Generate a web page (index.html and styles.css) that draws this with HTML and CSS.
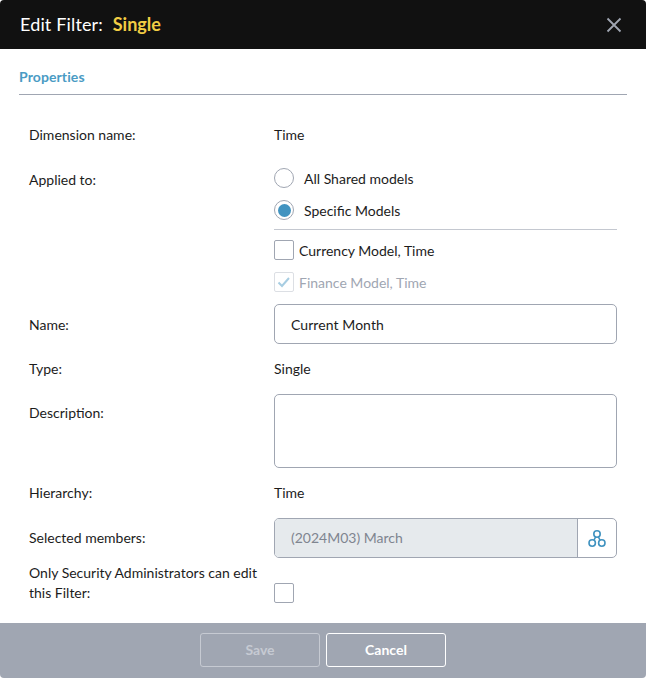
FILE: index.html
```html
<!DOCTYPE html>
<html lang="en">
<head>
<meta charset="utf-8">
<title>Edit Filter</title>
<link rel="stylesheet" href="styles.css">
</head>
<body>
<div class="dialog">
  <header class="head">
    <h1 class="title">Edit Filter: <span class="title-name">Single</span></h1>
    <svg class="close" width="16" height="16" viewBox="0 0 16 16"><path d="M1.5 1.5l13 13M14.5 1.5l-13 13"/></svg>
  </header>
  <main class="body">
    <div class="tab">Properties</div>
    <div class="form">
      <div class="row row-dim"><div class="label">Dimension name:</div><div class="value">Time</div></div>
      <div class="row row-applied">
        <div class="label">Applied to:</div>
        <div class="options">
          <div class="radio-line"><span class="radio"></span>All Shared models</div>
          <div class="radio-line"><span class="radio on"></span>Specific Models</div>
          <div class="divider"></div>
          <div class="check-line"><span class="check"></span>Currency Model, Time</div>
          <div class="check-line disabled"><span class="check">
            <svg width="14" height="14" viewBox="0 0 14 14"><path d="M1.5 7.5l3.5 3.5 7-8"/></svg>
          </span>Finance Model, Time</div>
        </div>
      </div>
      <div class="row row-name"><div class="label">Name:</div><div class="input">Current Month</div></div>
      <div class="row row-type"><div class="label">Type:</div><div class="value">Single</div></div>
      <div class="row row-desc"><div class="label">Description:</div><div class="textarea"></div></div>
      <div class="row row-hier"><div class="label">Hierarchy:</div><div class="value">Time</div></div>
      <div class="row row-sel">
        <div class="label">Selected members:</div>
        <div class="picker">
          <div class="picker-text">(2024M03) March</div>
          <div class="picker-btn">
            <svg width="20" height="20" viewBox="0 0 20 20"><circle cx="10" cy="6" r="3.2"/><circle cx="5.2" cy="15" r="3.2"/><circle cx="14.8" cy="15" r="3.2"/><path d="M8.6 9L7 12.2M11.4 9L13 12.2"/></svg>
          </div>
        </div>
      </div>
      <div class="row row-sec">
        <div class="label label-wrap">Only Security Administrators can edit this Filter:</div>
        <span class="check"></span>
      </div>
    </div>
  </main>
  <footer class="foot">
    <button class="btn btn-off" type="button">Save</button>
    <button class="btn" type="button">Cancel</button>
  </footer>
</div>
</body>
</html>
```
FILE: styles.css
```css
* { box-sizing: border-box; }
html, body { margin: 0; height: 100%; }
body {
  background: #fff;
  font-family: Lato, "Liberation Sans", sans-serif;
  font-size: 14px;
  color: #1c1c1c;
  overflow: hidden;
}
.dialog {
  width: 646px;
  height: 678px;
  display: flex;
  flex-direction: column;
  background: #fff;
  border-radius: 4px;
  overflow: hidden;
}
.head {
  height: 49px;
  flex: none;
  background: #111;
  display: flex;
  align-items: center;
  justify-content: space-between;
  padding: 0 24px 2px 20px;
}
.title {
  margin: 0;
  font-size: 18px;
  font-weight: 400;
  color: #fff;
  letter-spacing: 0.15px;
}
.title-name { color: #f2cd44; font-weight: 700; margin-left: 5px; letter-spacing: 0; }
.close { position: relative; top: 1px; }
.close path { stroke: #a0a6b2; stroke-width: 1.8; fill: none; }
.body { flex: 1; padding: 0 19px; }
.tab {
  height: 46px;
  padding-top: 19px;
  line-height: 17px;
  font-weight: 700;
  font-size: 14px;
  letter-spacing: 0.1px;
  color: #4a9bc4;
  border-bottom: 1px solid #a0a6b2;
}
.form { padding: 0 10px 0 10px; }
.row { display: flex; align-items: flex-start; }
.label { width: 245px; flex: none; line-height: 20px; }
.value { line-height: 20px; }
.row-dim { margin-top: 30px; }
.row-applied { margin-top: 25px; }
.options { flex: 1; margin-top: -2px; }
.radio-line { display: flex; align-items: center; height: 20px; margin-bottom: 12px; }
.radio {
  width: 20px; height: 20px; border-radius: 50%;
  border: 1px solid #a0a6b2; margin-right: 10px; position: relative; flex: none;
}
.radio.on::after {
  content: ""; position: absolute; left: 2.5px; top: 2.5px; width: 13px; height: 13px;
  border-radius: 50%; background: #4193c0;
}
.divider { height: 1px; background: #c4c8d0; margin: -3px 0 10px; }
.check-line { display: flex; align-items: center; height: 20px; margin-bottom: 12px; }
.check-line .check { margin-right: 5px; }
.check {
  width: 20px; height: 20px; flex: none; border: 1px solid #a0a6b2; border-radius: 2px;
  display: flex; align-items: center; justify-content: center; background: #fff;
}
.check svg path { stroke: #a7cde2; stroke-width: 2; fill: none; }
.disabled { color: #a0a6b2; }
.disabled .check { border-color: #dcdfe4; }
.row-name { height: 40px; align-items: center; }
.row-name .label { padding-top: 1px; }
.input {
  flex: 1; height: 40px; border: 1px solid #a0a6b2; border-radius: 5px;
  padding: 0 16px; line-height: 40px; font-kerning: none;
}
.row-type { margin-top: 15px; }
.row-desc { margin-top: 15px; }
.row-desc .label { margin-top: 9px; }
.textarea { flex: 1; height: 74px; border: 1px solid #a0a6b2; border-radius: 5px; }
.row-hier { margin-top: 15px; }
.row-sel { margin-top: 15px; height: 40px; align-items: center; }
.picker { flex: 1; height: 40px; display: flex; border: 1px solid #a0a6b2; border-radius: 5px; overflow: hidden; }
.picker-text { flex: 1; background: #e6eaed; color: #7f8590; padding: 0 16px; line-height: 38px; }
.picker-btn {
  width: 39px; border-left: 1px solid #a0a6b2;
  display: flex; align-items: center; justify-content: center;
}
.picker-btn svg * { stroke: #4193c0; stroke-width: 1.6; fill: none; }
.row-sec { margin-top: 5px; position: relative; align-items: flex-end; }
.label-wrap { width: 245px; padding-right: 10px; }
.foot {
  height: 55px; flex: none; background: #a0a6b2;
  display: flex; align-items: center; justify-content: center; gap: 6px;
  padding: 0 1px 1px 0;
}
.btn {
  width: 120px; height: 34px; background: transparent; border: 1px solid #fff; border-radius: 3px;
  color: #fff; font: 700 14px Lato, "Liberation Sans", sans-serif; padding: 0 0 1px 1px;
}
.btn-off { border-color: #c6cad2; color: #c6cad2; }
```
